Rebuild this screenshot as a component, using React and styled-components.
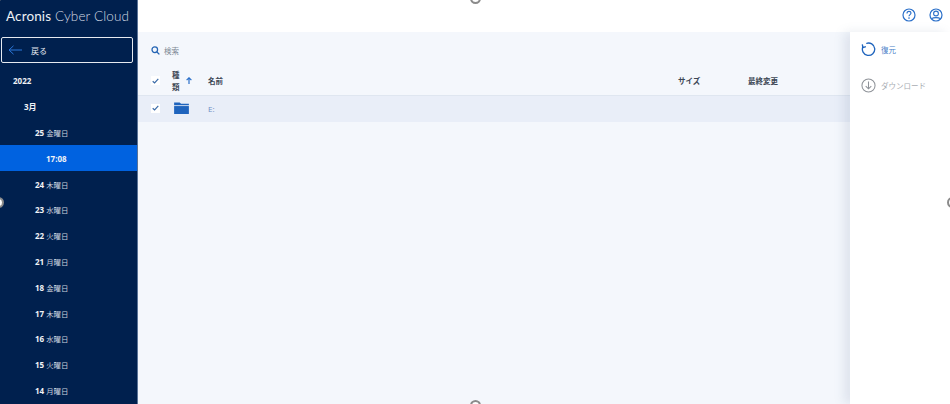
import React from "react";
import styled, { createGlobalStyle } from "styled-components";

const GlobalStyle = createGlobalStyle`
  html, body { margin: 0; padding: 0; height: 100%; background: #fff; overflow: hidden; }
  #root { height: 100%; }
  body { font-family: "Open Sans", "Noto Sans CJK JP", sans-serif; }
`;

const days = [
  ["24", "木曜日"], ["23", "水曜日"], ["22", "火曜日"], ["21", "月曜日"],
  ["18", "金曜日"], ["17", "木曜日"], ["16", "水曜日"], ["15", "火曜日"], ["14", "月曜日"],
];

const CheckIcon = () => (
  <svg width="7" height="6" viewBox="0 0 7 6">
    <path d="M0.7 3.2 L2.6 5 L6.3 0.9" fill="none" stroke="#3a6ba8" strokeWidth="1.2" />
  </svg>
);

export default function App() {
  return (
    <>
      <GlobalStyle />
      <Page>
        <Sidebar>
          <Logo><b>Acronis</b> Cyber Cloud</Logo>
          <BackButton>
            <svg width="14" height="10" viewBox="0 0 14 10">
              <path d="M14 5 H1 M5.5 0.8 L1 5 L5.5 9.2" fill="none" stroke="#2a76d8" strokeWidth="1" />
            </svg>
            <span>戻る</span>
          </BackButton>
          <Tree>
            <TreeRow $indent={13}><strong>2022</strong></TreeRow>
            <TreeRow $indent={24}><strong>3月</strong></TreeRow>
            <TreeRow $indent={35}><strong>25</strong> 金曜日</TreeRow>
            <TreeRow $indent={46} $active><strong>17:08</strong></TreeRow>
            {days.map(([num, label]) => (
              <TreeRow key={num} $indent={35}><strong>{num}</strong> {label}</TreeRow>
            ))}
          </Tree>
        </Sidebar>

        <Content>
          <TopBar>
            <svg width="16" height="16" viewBox="0 0 16 16">
              <circle cx="8" cy="8" r="6" fill="none" stroke="#2a6fc9" strokeWidth="1.2" />
              <path d="M6 6.4 C6 5 7 4.4 8 4.4 C9.1 4.4 10 5.1 10 6.1 C10 7.6 8 7.6 8 9.3" fill="none" stroke="#2a6fc9" strokeWidth="1.1" />
              <circle cx="8" cy="11.1" r="0.8" fill="#2a6fc9" />
            </svg>
            <svg width="16" height="16" viewBox="0 0 16 16">
              <circle cx="8" cy="8" r="6" fill="none" stroke="#2a6fc9" strokeWidth="1.2" />
              <circle cx="8" cy="6.5" r="2.4" fill="none" stroke="#2a6fc9" strokeWidth="1.1" />
              <path d="M3.9 11.6 C5 10.4 11 10.4 12.1 11.6" fill="none" stroke="#2a6fc9" strokeWidth="1.2" />
            </svg>
          </TopBar>
          <Body>
            <Main>
              <SearchBar>
                <svg width="9" height="9" viewBox="0 0 10 10">
                  <circle cx="4.2" cy="4.2" r="3.1" fill="none" stroke="#2464b4" strokeWidth="1.4" />
                  <path d="M6.6 6.6 L9.3 9.3" stroke="#2464b4" strokeWidth="1.5" />
                </svg>
                <span>検索</span>
              </SearchBar>
              <HeaderRow>
                <CheckCell><CheckBox><CheckIcon /></CheckBox></CheckCell>
                <TypeCell>
                  <TypeLabel>種<br />類</TypeLabel>
                  <svg width="6" height="7" viewBox="0 0 6 7">
                    <path d="M3 7 V1 M0.6 3.2 L3 0.8 L5.4 3.2" fill="none" stroke="#2a6fc9" strokeWidth="1.2" />
                  </svg>
                </TypeCell>
                <NameCell>名前</NameCell>
                <SizeCell>サイズ</SizeCell>
                <DateCell>最終変更</DateCell>
              </HeaderRow>
              <DataRow>
                <CheckCell><CheckBox><CheckIcon /></CheckBox></CheckCell>
                <FolderCell>
                  <svg width="15" height="12" viewBox="0 0 16 13">
                    <path d="M0 0.5 H6 L7.5 2 H16 V3.6 H0 Z" fill="#1f64bd" />
                    <rect x="0" y="4.4" width="16" height="8.6" fill="#1f64bd" />
                  </svg>
                </FolderCell>
                <DriveName>E:</DriveName>
              </DataRow>
            </Main>
            <ActionPanel>
              <Action $color="#4a7fc9">
                <svg width="15" height="15" viewBox="0 0 16 16">
                  <path d="M5.6 1.6 A6.6 6.6 0 1 1 2.1 4.9" fill="none" stroke="#1f64bd" strokeWidth="1.4" />
                  <path d="M1.4 2.6 L2 6 L5.2 5" fill="none" stroke="#1f64bd" strokeWidth="1.4" />
                </svg>
                <span>復元</span>
              </Action>
              <Action $color="#a9adb3">
                <svg width="15" height="15" viewBox="0 0 16 16">
                  <circle cx="8" cy="8" r="7" fill="none" stroke="#8e9298" strokeWidth="1.1" />
                  <path d="M8 3.8 V11.4 M5 8.6 L8 11.6 L11 8.6" fill="none" stroke="#8e9298" strokeWidth="1.1" />
                </svg>
                <span>ダウンロード</span>
              </Action>
            </ActionPanel>
          </Body>
        </Content>

        <Handle $x={475.5} $y={-1.5} />
        <Handle $x={475.5} $y={405.5} />
        <Handle $x={-2} $y={202} />
        <Handle $x={952} $y={202} />
        <Handle $x={-4} $y={-4} />
        <Handle $x={954} $y={-4} />
        <Handle $x={-4} $y={408} />
        <Handle $x={954} $y={408} />
      </Page>
    </>
  );
}

const Page = styled.div`
  position: relative;
  display: flex;
  width: 950px;
  height: 404px;
  overflow: hidden;
`;

const Sidebar = styled.aside`
  flex: 0 0 137px;
  height: 404px;
  box-sizing: content-box;
  background: #00204e;
  border-right: 1px solid #5a7397;
  overflow: hidden;
`;

const Logo = styled.div`
  height: 37px;
  padding: 8px 0 0 6px;
  box-sizing: border-box;
  font-family: "Lato", sans-serif;
  font-size: 13.5px;
  line-height: 17px;
  font-weight: 300;
  letter-spacing: 0.12px;
  color: #d3d9e3;
  white-space: nowrap;
  b { font-weight: 400; color: #eef1f5; }
`;

const BackButton = styled.div`
  display: flex;
  align-items: center;
  gap: 9px;
  margin-left: 1px;
  width: 132px;
  height: 26px;
  box-sizing: border-box;
  padding-left: 6px;
  border: 1px solid #e6eaf0;
  border-radius: 2px;
  font-size: 8px;
  color: #e6eaf0;
`;

const Tree = styled.div`
  padding-top: 5px;
`;

const TreeRow = styled.div`
  display: flex;
  align-items: center;
  gap: 2px;
  height: 25.8px;
  padding-left: ${(p) => p.$indent}px;
  font-size: 7.4px;
  color: #c9d1de;
  white-space: nowrap;
  background: ${(p) => (p.$active ? "#0062e0" : "transparent")};
  strong { font-size: 8px; font-weight: 700; color: #f1f3f7; }
`;

const Content = styled.div`
  flex: 1;
  display: flex;
  flex-direction: column;
  min-width: 0;
`;

const TopBar = styled.header`
  flex: 0 0 32px;
  display: flex;
  align-items: center;
  justify-content: flex-end;
  gap: 11px;
  padding: 0 6px 2px 0;
  box-sizing: border-box;
  background: #fff;
`;

const Body = styled.div`
  flex: 1;
  display: flex;
  min-height: 0;
`;

const Main = styled.main`
  flex: 1;
  background: #f4f7fc;
`;

const SearchBar = styled.div`
  display: flex;
  align-items: center;
  gap: 4px;
  height: 36px;
  padding-left: 13px;
  font-size: 7.5px;
  color: #7d8794;
`;

const HeaderRow = styled.div`
  display: flex;
  align-items: center;
  height: 28px;
  box-sizing: border-box;
  padding-bottom: 2px;
  border-bottom: 1px solid #dfe6f0;
  font-size: 7.5px;
  font-weight: 700;
  color: #3c4654;
`;

const DataRow = styled.div`
  display: flex;
  align-items: center;
  height: 26px;
  box-sizing: border-box;
  padding-bottom: 2px;
  background: #e9eef8;
`;

const CheckCell = styled.div`
  flex: 0 0 35px;
  padding-left: 13px;
  box-sizing: border-box;
`;

const CheckBox = styled.div`
  display: flex;
  align-items: center;
  justify-content: center;
  width: 9px;
  height: 9px;
  background: #fff;
`;

const TypeCell = styled.div`
  flex: 0 0 36px;
  margin-left: -1px;
  display: flex;
  align-items: center;
  gap: 6px;
`;

const TypeLabel = styled.div`
  line-height: 12px;
`;

const FolderCell = styled.div`
  flex: 0 0 35px;
  display: flex;
  align-items: center;
  padding-left: 1px;
  box-sizing: border-box;
`;

const NameCell = styled.div`
  flex: 0 0 470px;
`;

const SizeCell = styled.div`
  flex: 0 0 70px;
`;

const DateCell = styled.div`
  flex: 1;
`;

const DriveName = styled.div`
  font-size: 8px;
  color: #6f8dc4;
`;

const ActionPanel = styled.div`
  flex: 0 0 100px;
  background: #fff;
  box-shadow: -6px 0 10px rgba(90, 110, 150, 0.14);
  z-index: 1;
`;

const Action = styled.div`
  display: flex;
  align-items: center;
  gap: 5px;
  height: 35.5px;
  padding-left: 11px;
  font-size: 7.5px;
  color: ${(p) => p.$color};
`;

const Handle = styled.div`
  position: absolute;
  left: ${(p) => p.$x - 5.5}px;
  top: ${(p) => p.$y - 5.5}px;
  width: 11px;
  height: 11px;
  box-sizing: border-box;
  border: 2px solid #8b8b8b;
  border-radius: 50%;
  background: #fff;
  z-index: 2;
`;
